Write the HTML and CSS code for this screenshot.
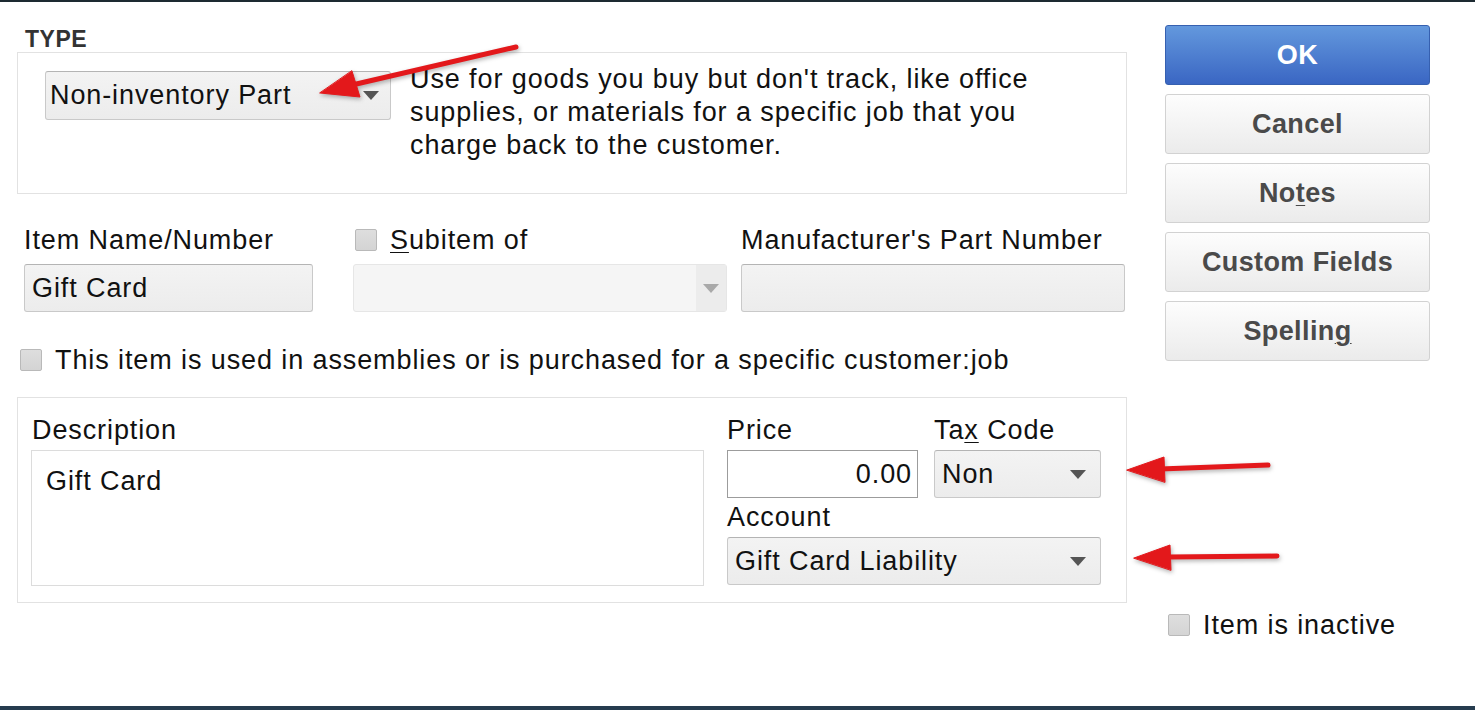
FILE: index.html
```html
<!DOCTYPE html>
<html lang="en">

<head>
  <meta charset="UTF-8">
  <meta name="viewport" content="width=device-width, initial-scale=1.0">
  <title>New Item</title>
  <link rel="stylesheet" href="styles.css">
</head>

<body>
  <div class="top-rule"></div>

  <div class="window">
    <div class="form">
      <div class="type-title">TYPE</div>
      <div class="type-box">
        <div class="select type-select">
          <span>Non-inventory Part</span>
          <i class="caret"></i>
        </div>
        <p class="type-help">Use for goods you buy but don't track, like office supplies, or materials for a specific job that you charge back to the customer.</p>
      </div>

      <div class="name-row">
        <div class="field name-field">
          <label>Item Name/Number</label>
          <div class="input">Gift Card</div>
        </div>
        <div class="field sub-field">
          <label class="check"><span class="box"></span><span><u>S</u>ubitem of</span></label>
          <div class="select disabled">
            <span></span>
            <b class="caret-zone"><i class="caret"></i></b>
          </div>
        </div>
        <div class="field mpn-field">
          <label>Manufacturer's Part Number</label>
          <div class="input"></div>
        </div>
      </div>

      <label class="check assembly"><span class="box"></span><span>This item is used in assemblies or is purchased for a specific customer:job</span></label>

      <div class="detail-box">
        <div class="desc-col">
          <label>Description</label>
          <div class="textarea">Gift Card</div>
        </div>
        <div class="price-col">
          <div class="field price-field">
            <label>Price</label>
            <div class="input white num">0.00</div>
          </div>
          <div class="field tax-field">
            <label>Ta<u>x</u> Code</label>
            <div class="select"><span>Non</span><i class="caret"></i></div>
          </div>
          <div class="field account-field">
            <label>Account</label>
            <div class="select"><span>Gift Card Liability</span><i class="caret"></i></div>
          </div>
        </div>
      </div>
    </div>

    <div class="side">
      <button class="btn primary">OK</button>
      <button class="btn">Cancel</button>
      <button class="btn">No<u>t</u>es</button>
      <button class="btn">Custom Fields</button>
      <button class="btn">Spellin<u>g</u></button>
      <label class="check inactive"><span class="box"></span><span>Item is inactive</span></label>
    </div>
  </div>

  <div class="bottom-bar"></div>

  <!-- annotation arrows drawn over the dialog -->
  <svg class="arrows" width="1475" height="710" viewBox="0 0 1475 710">
    <g fill="#e3181b" stroke="#e3181b" stroke-linecap="round">
      <line x1="516" y1="47" x2="352" y2="85" stroke-width="5" />
      <polygon points="320,93 360,97 352,71" stroke-width="1" />
      <line x1="1268" y1="465" x2="1160" y2="469" stroke-width="5" />
      <polygon points="1127,470 1164,457 1165,482" stroke-width="1" />
      <line x1="1277" y1="556" x2="1168" y2="557" stroke-width="5" />
      <polygon points="1134,558 1170,545 1171,570" stroke-width="1" />
    </g>
  </svg>
</body>
</html>
```

FILE: styles.css
```css
body {
  font-family: "Liberation Sans", Arial, sans-serif;
  background-color: #fff;
  color: #111;
  margin: 0;
  padding: 0;
  width: 1475px;
  height: 710px;
  overflow: hidden;
  position: relative;
  letter-spacing: 0.9px;
}

.top-rule {
  height: 2px;
  background-color: #1d2a31;
}

.window {
  display: flex;
  height: 704px;
  padding-left: 17px;
  box-sizing: border-box;
}

.form {
  width: 1110px;
  padding-top: 24px;
}

label {
  display: block;
  font-size: 27px;
  line-height: 30px;
  color: #111;
}

u {
  text-decoration-thickness: 1px;
  text-underline-offset: 3px;
}

.type-title {
  font-size: 23px;
  line-height: 26px;
  font-weight: bold;
  color: #333;
  padding-left: 8px;
  letter-spacing: 0.5px;
}

.type-box {
  display: flex;
  align-items: flex-start;
  height: 142px;
  box-sizing: border-box;
  border: 1px solid #e2e2e2;
  padding: 10px 27px 0;
}

.type-help {
  margin: 0 0 0 19px;
  width: 625px;
  font-size: 27px;
  line-height: 33px;
  color: #111;
}

.select,
.input {
  display: flex;
  align-items: center;
  height: 48px;
  box-sizing: border-box;
  border: 1px solid #c9c9c9;
  border-top-color: #b4b4b4;
  border-radius: 3px;
  background: linear-gradient(#f3f3f3, #ececec);
  font-size: 27px;
  padding: 0 7px;
  color: #111;
}

.select span {
  flex: 1;
  white-space: nowrap;
}

.caret {
  width: 0;
  height: 0;
  border-left: 8px solid transparent;
  border-right: 8px solid transparent;
  border-top: 9px solid #555;
  margin-right: 2px;
}

.type-select {
  width: 346px;
  height: 49px;
  margin-top: 8px;
  padding-left: 4px;
  padding-right: 9px;
  flex-shrink: 0;
}

.name-row {
  display: flex;
  margin-top: 31px;
}

.field label {
  margin-bottom: 9px;
}

.name-field {
  width: 289px;
  margin-left: 7px;
}

.sub-field {
  width: 374px;
  margin-left: 40px;
}

.mpn-field {
  width: 384px;
  margin-left: 14px;
}

.select.disabled {
  background: #f5f5f5;
  border-color: #e6e6e6;
  padding: 0;
}

.caret-zone {
  display: flex;
  align-items: center;
  justify-content: center;
  width: 30px;
  align-self: stretch;
  background-color: #ececec;
}

.caret-zone .caret {
  border-top-color: #a9a9a9;
  margin: 0;
}

.check {
  display: flex;
  align-items: center;
}

.box {
  width: 20px;
  height: 20px;
  border: 1px solid #b9b9b9;
  border-radius: 2px;
  background: linear-gradient(#dedede, #d4d4d4);
  margin-right: 13px;
  flex-shrink: 0;
}

.sub-field .check {
  margin-left: 2px;
}

.assembly {
  margin-top: 33px;
  margin-left: 3px;
}

.detail-box {
  display: flex;
  margin-top: 22px;
  height: 206px;
  box-sizing: border-box;
  border: 1px solid #e2e2e2;
  padding: 17px 25px 0 13px;
}

.desc-col {
  width: 673px;
}

.desc-col label {
  margin-bottom: 5px;
  padding-left: 1px;
}

.textarea {
  height: 136px;
  box-sizing: border-box;
  border: 1px solid #dcdcdc;
  padding: 15px 14px;
  font-size: 27px;
  line-height: 30px;
}

.price-col {
  display: grid;
  grid-template-columns: 191px 167px;
  align-content: start;
  column-gap: 16px;
  margin-left: 23px;
}

.price-col .field label {
  margin-bottom: 5px;
}

.input.white {
  background: #fff;
  border: 1px solid #9c9c9c;
  border-radius: 0;
}

.num {
  justify-content: flex-end;
  padding-right: 5px;
}

.tax-field .select {
  padding-right: 12px;
}

.account-field {
  grid-column: 1 / 3;
  margin-top: 4px;
}

.account-field .select {
  padding-right: 12px;
}

.side {
  display: flex;
  flex-direction: column;
  width: 265px;
  margin-left: 38px;
  padding-top: 23px;
}

.btn {
  height: 60px;
  margin-bottom: 9px;
  border: 1px solid #d2d2d2;
  border-radius: 3px;
  background: linear-gradient(#fdfdfd, #ebebeb);
  font-family: "Liberation Sans", Arial, sans-serif;
  font-size: 27px;
  font-weight: bold;
  letter-spacing: 0.4px;
  color: #4a4a4a;
  padding: 0;
}

.btn.primary {
  background: linear-gradient(#6398dd, #3a66c3);
  border-color: #3660b0;
  color: #fff;
}

.inactive {
  margin-top: 240px;
  margin-left: 3px;
}

.bottom-bar {
  position: absolute;
  left: 0;
  right: 0;
  bottom: 0;
  height: 4px;
  background-color: #263c4f;
}

.arrows {
  position: absolute;
  left: 0;
  top: 0;
  pointer-events: none;
  filter: drop-shadow(1px 2px 2px rgba(0, 0, 0, 0.3));
}
```
